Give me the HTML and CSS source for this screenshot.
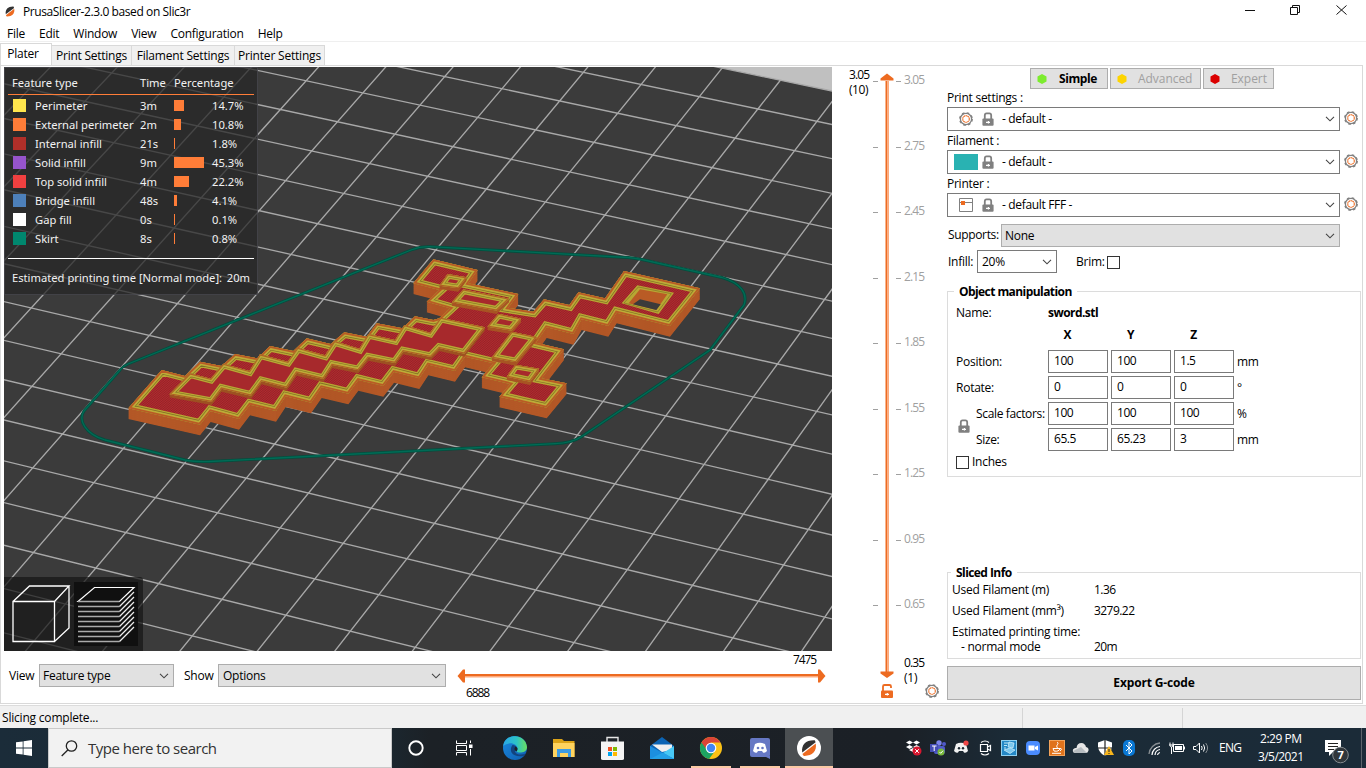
FILE: index.html
```html
<!DOCTYPE html>
<html lang="en">
<head>
<meta charset="utf-8">
<title>PrusaSlicer-2.3.0 based on Slic3r</title>
<link rel="stylesheet" href="styles.css">
</head>
<body>
<svg class="defs" width="0" height="0">
  <defs>
    <symbol id="gear" viewBox="0 0 14 14">
      <circle cx="7" cy="7" r="5.6" fill="none" stroke="#808080" stroke-width="1.3"/>
      <circle cx="7" cy="7" r="6.2" fill="none" stroke="#808080" stroke-width="1.4" stroke-dasharray="2.6 2.27"/>
      <circle cx="7" cy="7" r="3.3" fill="none" stroke="#ed6b21" stroke-width="1.1" stroke-dasharray="1.7 .37"/>
    </symbol>
    <symbol id="lock" viewBox="0 0 12 14">
      <path d="M2.8 7V3.4Q2.8 1.3 4.6 1.3H7.4Q9.2 1.3 9.2 3.4V7" fill="none" stroke="#808080" stroke-width="1.8"/>
      <rect x=".4" y="6.6" width="11.2" height="7.2" rx="1" fill="#808080"/>
      <path d="M4 10.3H8M6.4 9V11.6" stroke="#fff" stroke-width="1.2"/>
    </symbol>
    <symbol id="chev" viewBox="0 0 10 6"><path d="M1 .8L5 4.8L9 .8" fill="none" stroke="#444" stroke-width="1.1"/></symbol>
    <symbol id="prusa" viewBox="0 0 24 24">
      <path d="M5.2 16.5C4 8.5 9 3.8 17.8 4.2L18.6 6.2Z" fill="#323232"/>
      <path d="M18.8 7.6C20 15.5 15 20.2 6.8 19.9L5.4 18Z" fill="#ed6b21"/>
    </symbol>
  </defs>
</svg>

<div class="app">
  <header class="titlebar">
    <svg class="logo" viewBox="4 3 16 18"><use href="#prusa" width="24" height="24"/></svg>
    <span class="title">PrusaSlicer-2.3.0 based on Slic3r</span>
    <svg class="winbtns" viewBox="0 0 106 12"><path d="M1 6.5H11M92.5 1.5L102.500 10.500M102.500 1.500L92.500 10.500" stroke="#111" fill="none"/><path d="M46.500 3.500H53.500V10.500H46.500ZM48.500 3.500V1.500H55.500V8.500H53.500" stroke="#111" fill="none"/></svg>
  </header>
  <nav class="menu"><span>File</span><span>Edit</span><span>Window</span><span>View</span><span>Configuration</span><span>Help</span></nav>
  <div class="tabs">
    <span class="tab on t1">Plater</span><span class="tab t2">Print Settings</span><span class="tab t3">Filament Settings</span><span class="tab t4">Printer Settings</span>
  </div>

  <main class="main">
    <section class="left">
      <div class="view3d">
        <svg class="scene" viewBox="4 67 828 584" width="828" height="584">
          <defs>
            <pattern id="hatch" width="5" height="5" patternUnits="userSpaceOnUse" patternTransform="rotate(50)"><rect width="5" height="5" fill="#b32a2f"/><rect width="2" height="5" fill="#8c2226"/></pattern>
            <pattern id="wall" width="9" height="5" patternUnits="userSpaceOnUse" patternTransform="rotate(12)"><rect width="9" height="5" fill="#b75a28"/><rect width="9" height="1.5" fill="#a9501f"/></pattern>
            <path id="body" d="M25 505L125 390L195 408L240 365L305 378L345 342L412 355L450 318L520 333L560 295L632 312L673 277L740 290L770 250L848 265L885 229L940 240L958 235L990 205L920 185L958 150L880 130L940 58L1073 90L1045 130L1195 162L1165 203L1240 215L1272 178L1348 195L1375 157L1455 175L1512 93L1740 145L1650 258L1490 218L1465 258L1385 238L1360 282L1280 262L1248 308L1332 328L1265 415L1340 430L1280 503L1138 470L1170 432L1085 412L1120 370L1035 350L1005 393L925 374L898 415L822 396L790 438L715 420L685 461L605 442L573 488L497 469L468 513L390 494L357 537L272 514L240 554Z"/>
            <path id="blade" d="M148 463L210 400L272 416L310 371L388 393L420 343L503 365L533 323L615 346L643 303L718 326L745 282L825 300L853 255L930 278L962 233L1095 262L1033 341L958 324L932 351L850 334L825 369L745 353L715 391L637 375L610 417L530 398L500 443L425 424L393 467L305 446L275 486Z"/>
            <path id="b1" d="M958 137L983 102L1040 112L1015 145Z"/>
            <path id="b2" d="M995 187L1030 148L1168 176L1130 212Z"/>
            <path id="b3" d="M1102 260L1135 221L1204 236L1174 272Z"/>
            <path id="b4" d="M1115 353L1175 275L1250 291L1188 367Z"/>
            <path id="b5" d="M1160 410L1186 374L1258 386L1230 425Z"/>
            <clipPath id="cbody"><use href="#body"/></clipPath>
            <clipPath id="cblade"><use href="#blade"/></clipPath>
          </defs>
          <rect x="4" y="67" width="828" height="584" fill="#c0c0c0"/>
          <path id="bed" fill="#3b3b3b"/>
          <path id="grid" fill="none" stroke="#a8a8a8" stroke-width="1.35"/>
          <path d="M128 364L411 250Q420 246.500 430 246.700L628 257.500Q640 258.500 655 262.500L722 277.500C741 283 748 294 744 305L710 350L581 437Q572 443 555 443.700L210 461.500Q195 462 185 460L105 440C85 434 78 420 84 411L120 370Q123 366 128 364Z" fill="none" stroke="#00503f" stroke-width="2.900"/>
          <path d="M128 364L411 250Q420 246.500 430 246.700L628 257.500Q640 258.500 655 262.500L722 277.500C741 283 748 294 744 305L710 350L581 437Q572 443 555 443.700L210 461.500Q195 462 185 460L105 440C85 434 78 420 84 411L120 370Q123 366 128 364Z" fill="none" stroke="#006b56" stroke-width="1.300"/>
          <g transform="translate(120 240) scale(.33333)">
            <g id="walls" fill="url(#wall)"></g>
            <use href="#body" fill="url(#hatch)"/>
            <g clip-path="url(#cbody)" fill="none">
              <use href="#body" stroke="#b7a733" stroke-width="33"/><use href="#body" stroke="#7f6e25" stroke-width="25"/><use href="#body" stroke="#bdab38" stroke-width="21"/><use href="#body" stroke="#b95b25" stroke-width="11"/>
            </g>
            <path d="M1505 190L1552 136L1662 158L1616 222Z" fill="#b7a733"/>
            <path d="M1512 189L1555 141L1654 161L1613 216Z" fill="none" stroke="#806f25" stroke-width="2"/>
            <path d="M1526 190L1560 148L1642 163L1609 210Z" fill="#b95b25"/>
            <path d="M1560 178L1622 193L1609 210L1539 193Z" fill="#3b3b3b"/>
            <g id="bladewall" fill="#9e5122"></g>
            <use href="#blade" fill="#a7292c"/>
            <g clip-path="url(#cblade)" fill="none">
              <use href="#blade" stroke="#b7a733" stroke-width="28"/><use href="#blade" stroke="#7f6e25" stroke-width="20"/><use href="#blade" stroke="#bdab38" stroke-width="17"/><use href="#blade" stroke="#b06024" stroke-width="7"/>
            </g>
            <g id="studs"></g>
          </g>
        </svg>
        <div class="legend">
          <div class="lhead"><span class="c1">Feature type</span><span class="c2">Time</span><span class="c3">Percentage</span></div>
          <div class="lrow"><i style="background:#ffe64d"></i><span class="n">Perimeter</span><span class="t">3m</span><span class="b"><b style="width:10px"></b></span><span>14.7%</span></div>
          <div class="lrow"><i style="background:#ff7d38"></i><span class="n">External perimeter</span><span class="t">2m</span><span class="b"><b style="width:7px"></b></span><span>10.8%</span></div>
          <div class="lrow"><i style="background:#b02f29"></i><span class="n">Internal infill</span><span class="t">21s</span><span class="b"><b style="width:1px"></b></span><span>1.8%</span></div>
          <div class="lrow"><i style="background:#9654cc"></i><span class="n">Solid infill</span><span class="t">9m</span><span class="b"><b style="width:30px"></b></span><span>45.3%</span></div>
          <div class="lrow"><i style="background:#f04040"></i><span class="n">Top solid infill</span><span class="t">4m</span><span class="b"><b style="width:15px"></b></span><span>22.2%</span></div>
          <div class="lrow"><i style="background:#4d80ba"></i><span class="n">Bridge infill</span><span class="t">48s</span><span class="b"><b style="width:3px"></b></span><span>4.1%</span></div>
          <div class="lrow"><i style="background:#fff"></i><span class="n">Gap fill</span><span class="t">0s</span><span class="b"><b style="width:1px"></b></span><span>0.1%</span></div>
          <div class="lrow"><i style="background:#00876e"></i><span class="n">Skirt</span><span class="t">8s</span><span class="b"><b style="width:1px"></b></span><span>0.8%</span></div>
          <div class="lfoot"><span>Estimated printing time [Normal mode]:</span><span>20m</span></div>
        </div>
        <div class="modes">
          <svg width="139" height="74" viewBox="4 577 139 74">
            <rect x="74" y="582" width="64" height="64" fill="#101010"/>
            <path d="M13 601.500H54.500V641.500H13ZM13 601.500L29.500 586H69L54.500 601.500M69 586V628L54.500 641.500" fill="none" stroke="#fff" stroke-width="1.300"/>
            <path d="M78 601.500L94.500 587.500H134L119.500 601.500Z" fill="none" stroke="#fff" stroke-width="1.200"/>
            <path d="M78 606.500H119.500M78 611.500H119.500M78 616.500H119.500M78 621.500H119.500M78 626.500H119.500M78 631.500H119.500M78 636.500H119.500M78 641.500H119.500M78 601.500H119.500" stroke="#aaa" stroke-width="1.300"/>
            <path d="M119.500 606.500L134 592M119.500 611.500L134 597M119.500 616.500L134 602M119.500 621.500L134 607M119.500 626.500L134 612M119.500 631.500L134 617M119.500 636.500L134 622M119.500 641.500L134 627" stroke="#eee" stroke-width="1.300"/>
          </svg>
        </div>
      </div>
      <div class="controls">
        <span class="lab">View</span>
        <div class="sel gray v1"><span>Feature type</span><svg class="chev"><use href="#chev"/></svg></div>
        <span class="lab l2">Show</span>
        <div class="sel gray v2"><span>Options</span><svg class="chev"><use href="#chev"/></svg></div>
        <svg class="hslider" width="380" height="52" viewBox="452 651 380 52">
          <rect x="465" y="674" width="354" height="3" fill="#ed6b21"/><rect x="465" y="676" width="354" height="1.500" fill="#fda97c"/>
          <path d="M457.500 676L463 669.500H465V682.500H463ZM825.500 676L820 669.500H818V682.500H820Z" fill="#ed6b21"/>
          <text x="466" y="697" textLength="24">6888</text><text x="793" y="664" textLength="24">7475</text>
        </svg>
      </div>
    </section>

    <svg class="vslider" width="115" height="637" viewBox="832 66 115 637">
      <rect x="885.500" y="81" width="2" height="591" fill="#ed6b21"/><rect x="887.500" y="81" width="1.500" height="591" fill="#fda97c"/>
      <path d="M880.500 80.500V78.500L887 73.500L893.500 78.500V80.500ZM880.500 671.500V673.500L887 678L893.500 673.500V671.500Z" fill="#ed6b21"/>
      <path d="M873 81.500h5M896 81.500h5M873 147.500h5M896 147.500h5M873 212.500h5M896 212.500h5M873 278.500h5M896 278.500h5M873 343.500h5M896 343.500h5M873 409.500h5M896 409.500h5M873 474.500h5M896 474.500h5M873 540.500h5M896 540.500h5M873 605.500h5M896 605.500h5" stroke="#a0a0a0"/>
      <g fill="#a0a0a0"><text x="904" y="84" textLength="21">3.05</text><text x="904" y="150" textLength="21">2.75</text><text x="904" y="215" textLength="21">2.45</text><text x="904" y="281" textLength="21">2.15</text><text x="904" y="346" textLength="21">1.85</text><text x="904" y="412" textLength="21">1.55</text><text x="904" y="477" textLength="21">1.25</text><text x="904" y="543" textLength="21">0.95</text><text x="904" y="608" textLength="21">0.65</text></g>
      <text x="849" y="79" textLength="21">3.05</text><text x="849" y="94" textLength="19.500">(10)</text><text x="904" y="667" textLength="21">0.35</text><text x="904" y="682" textLength="13.500">(1)</text>
      <path d="M883 691V686.500Q883 685 884.500 685H889.500Q891 685 891 686.500V688" fill="none" stroke="#ed6b21" stroke-width="1.800"/><rect x="881" y="690.500" width="12" height="7.500" rx="1" fill="#ed6b21"/><path d="M885 694.300H889M887.300 693V695.600" stroke="#fff" stroke-width="1.200"/>
      <use href="#gear" x="925" y="684" width="14" height="14"/>
    </svg>

    <section class="right">
      <div class="modesel">
        <span class="mode act"><svg width="10" height="10"><path d="M5 0L9.500 2.500V7.500L5 10L.500 7.500V2.500Z" fill="#7cec2e"/></svg>Simple</span>
        <span class="mode m2"><svg width="10" height="10"><path d="M5 0L9.500 2.500V7.500L5 10L.500 7.500V2.500Z" fill="#fdd400"/></svg>Advanced</span>
        <span class="mode m3"><svg width="10" height="10"><path d="M5 0L9.500 2.500V7.500L5 10L.500 7.500V2.500Z" fill="#db0000"/></svg>Expert</span>
      </div>
      <div class="plabel">Print settings :</div>
      <div class="prow"><div class="sel preset"><svg class="i1"><use href="#gear"/></svg><svg class="i2"><use href="#lock"/></svg><span>- default -</span><svg class="chev"><use href="#chev"/></svg></div><svg class="pg"><use href="#gear"/></svg></div>
      <div class="plabel">Filament :</div>
      <div class="prow"><div class="sel preset"><div class="swatch"></div><svg class="i2"><use href="#lock"/></svg><span>- default -</span><svg class="chev"><use href="#chev"/></svg></div><svg class="pg"><use href="#gear"/></svg></div>
      <div class="plabel">Printer :</div>
      <div class="prow"><div class="sel preset"><svg class="i1" viewBox="0 0 14 14"><path d="M.500 .500H13.500V13.500H.500ZM.500 4.500H13.500" fill="none" stroke="#808080"/><rect x="2" y="3" width="4" height="4" fill="#ed6b21"/></svg><svg class="i2"><use href="#lock"/></svg><span>- default FFF -</span><svg class="chev"><use href="#chev"/></svg></div><svg class="pg"><use href="#gear"/></svg></div>
      <div class="suprow"><span class="suplab">Supports:</span><div class="sel gray sup"><span>None</span><svg class="chev"><use href="#chev"/></svg></div></div>
      <div class="infrow"><span class="inflab">Infill:</span><div class="sel inf"><span>20%</span><svg class="chev"><use href="#chev"/></svg></div><span class="brim">Brim:</span><span class="check"></span></div>

      <div class="box obj">
        <div class="boxtitle">Object manipulation</div>
        <div class="name"><span>Name:</span><b>sword.stl</b></div>
        <div class="manip">
          <span></span><b>X</b><b>Y</b><b>Z</b><span></span>
          <span>Position:</span><div class="inp">100</div><div class="inp">100</div><div class="inp">1.5</div><span class="u">mm</span>
          <span>Rotate:</span><div class="inp">0</div><div class="inp">0</div><div class="inp">0</div><span class="u">°</span>
          <span class="ind">Scale factors:</span><div class="inp">100</div><div class="inp">100</div><div class="inp">100</div><span class="u">%</span>
          <span class="ind">Size:</span><div class="inp">65.5</div><div class="inp">65.23</div><div class="inp">3</div><span class="u">mm</span>
          <svg class="ratio"><use href="#lock"/></svg>
        </div>
        <div class="inches"><span class="check"></span><span>Inches</span></div>
      </div>

      <div class="box info">
        <div class="boxtitle">Sliced Info</div>
        <div class="irow r1"><span>Used Filament (m)</span><span>1.36</span></div>
        <div class="irow r2"><span>Used Filament (mm³)</span><span>3279.22</span></div>
        <div class="irow r3"><span>Estimated printing time:</span></div>
        <div class="irow r4"><span>- normal mode</span><span>20m</span></div>
      </div>
      <div class="export">Export G-code</div>
    </section>
  </main>

  <footer class="status"><span>Slicing complete...</span><i></i><i></i></footer>

  <div class="taskbar">
    <div class="start"><svg width="16" height="16" viewBox="0 0 16 16"><path d="M0 2.300L6.700 1.400V7.600H0ZM7.500 1.200L16 0V7.600H7.500ZM0 8.400H6.700V14.600L0 13.700ZM7.500 8.400H16V16L7.500 14.800Z" fill="#fff"/></svg></div>
    <div class="search"><svg width="17" height="17" viewBox="0 0 17 17"><circle cx="10.500" cy="6" r="5.200" fill="none" stroke="#222" stroke-width="1.300"/><path d="M6.800 10L.700 16" stroke="#222" stroke-width="1.300"/></svg><span>Type here to search</span></div>
    <svg class="apps" width="441" height="40" viewBox="392 728 441 40">
      <circle cx="416" cy="748" r="6.700" fill="none" stroke="#fff" stroke-width="1.900"/>
      <path d="M456.500 740.500V743.500H466.500V740.500M456.500 755.500V752.500H466.500V755.500M456.500 746V750M466.500 746V750M456.500 745.500H466.500V750.500H456.500ZM470.500 740.500V743M470.500 749V755.500" fill="none" stroke="#fff"/><rect x="469" y="744.500" width="3.500" height="3.500" fill="#fff"/>
      <defs><linearGradient id="eg"><stop offset="0" stop-color="#2aa6e6"/><stop offset=".55" stop-color="#2cc3c8"/><stop offset="1" stop-color="#6ade5e"/></linearGradient><linearGradient id="eb" x2="1" y2="1"><stop offset="0" stop-color="#1a8ae0"/><stop offset="1" stop-color="#0f5db0"/></linearGradient></defs>
      <circle cx="515" cy="748" r="12" fill="url(#eb)"/><path d="M503.200 746C504.500 733 525.500 732.500 527 747C527.200 753 518 753.500 516.500 751.500C520 747 514 742.500 509 743.500Q505 744.300 503.200 746Z" fill="url(#eg)"/><path d="M512.500 745C508 751 513 758 523.500 756L526 753.500C517 757 512 751 517 748.500Q516 745 512.500 745Z" fill="#12437f"/><path d="M516.500 751.500Q513 749.500 515.500 746.500Q519 748 516.500 751.500Z" fill="#1c2127"/>
      <path d="M553 739H562L564 741H574.500V757H553Z" fill="#dca318"/><path d="M553 743H574.500V757H553Z" fill="#ffd35e"/><path d="M557 749H571V757H568V753H560V757H557Z" fill="#3e9be2"/>
      <path d="M607 743V737.500H618V743" fill="none" stroke="#e6e6e6" stroke-width="1.400"/><path d="M601 741.500H624V758.500Q624 760 622 760H603Q601 760 601 758.500Z" fill="#f4f4f4"/><path d="M608 747h4v4h-4z" fill="#f25022"/><path d="M613 747h4v4h-4z" fill="#7fba00"/><path d="M608 752h4v4h-4z" fill="#00a4ef"/><path d="M613 752h4v4h-4z" fill="#ffb900"/>
      <path d="M650 746L662 737L674 746V759H650Z" fill="#0c64b4"/><path d="M652 744.500H672V750L662 752Z" fill="#f0f0f0"/><path d="M650 746L663 753L674 759H650Z" fill="#1c8fe0"/><path d="M674 746L663 753L674 759Z" fill="#48c8f5"/><path d="M650 759L663 752.500L674 759Z" fill="#24a0e8"/>
      <circle cx="711" cy="748" r="11" fill="#fbc116"/><path d="M711 748L701.500 742.500A11 11 0 0 0 709 759L715 751Z" fill="#1da462"/><path d="M701.500 742.500A11 11 0 0 1 720.500 742.500H711L707 750Z" fill="#db4437"/><circle cx="711" cy="748" r="5.300" fill="#fff"/><circle cx="711" cy="748" r="4.200" fill="#4285f4"/>
      <rect x="750" y="738" width="20" height="19" rx="2" fill="#6678c4"/><path d="M764 756H770V759Z" fill="#6678c4"/><path d="M755 744Q760 741.500 765 744L767 751Q765 753.500 763 752.500L762 751H758L757 752.500Q755 753.500 753 751Z" fill="#fff"/><circle cx="758" cy="748" r="1.300" fill="#6678c4"/><circle cx="762.500" cy="748" r="1.300" fill="#6678c4"/>
      <rect x="785" y="728" width="48" height="40" fill="#4b4f52"/><circle cx="809" cy="748" r="12" fill="#fff"/><use href="#prusa" x="797" y="736" width="24" height="24"/>
      <path d="M691 766h40v2h-40zM740 766h40v2h-40zM785 766h48v2h-48z" fill="#fbc9a4"/>
    </svg>
    <svg class="tray" width="476" height="40" viewBox="890 728 476 40">
      <path d="M906 742.500L909.500 740.500L913 742.500L909.500 744.500ZM913 742.500L916.500 740.500L920 742.500L916.500 744.500ZM906 747L909.500 745L913 747L909.500 749ZM913 747L916.500 745L920 747L916.500 749ZM909 750L913 748L917 750L913 752Z" fill="#fff"/><circle cx="917" cy="751" r="4.500" fill="#d8172f"/><path d="M915.200 749.200L918.800 752.800M918.800 749.200L915.200 752.800" stroke="#fff"/>
      <circle cx="939" cy="743" r="2.700" fill="#7b83eb"/><circle cx="944" cy="744" r="2" fill="#5059c9"/><rect x="934" y="746" width="11" height="8" rx="2" fill="#5059c9"/><rect x="930" y="744" width="8" height="8" fill="#444db5"/><path d="M932 746H936.500M934.200 746V751" stroke="#fff"/><circle cx="941" cy="752" r="3.500" fill="#78b83c"/><path d="M939.500 752L940.700 753.300L943 750.700" stroke="#fff" fill="none"/>
      <path d="M956 744Q961 741.500 966 744L968 751Q966 753.500 964 752.500L963 751H959L958 752.500Q956 753.500 954 751Z" fill="#f2f2f2"/><circle cx="959" cy="748.300" r="1.200" fill="#1c2730"/><circle cx="963" cy="748.300" r="1.200" fill="#1c2730"/><circle cx="966" cy="743" r="2.600" fill="#f04747"/>
      <path d="M981 742.500Q985 739.500 989 742.500M981 753.500Q985 756.500 989 753.500M980.500 744.500H987.500V751.500H980.500ZM987.500 747L990.500 745.500V750.500L987.500 749" fill="none" stroke="#fff" stroke-width="1.200"/>
      <rect x="1001.500" y="740.500" width="15" height="15" fill="#2488c6" stroke="#8fd0f0"/><path d="M1004 743H1010M1004 745.500H1007M1004 748H1006" stroke="#bfe9f8"/><path d="M1009 742L1014 743L1013 748L1008 747ZM1004 750L1010 748L1015 750L1010 753.500Z" fill="#7cc8ee" stroke="#d6f1fc" stroke-width=".7"/>
      <rect x="1026" y="741" width="14" height="14" rx="4" fill="#4a8cff"/><path d="M1028.500 745.500H1034.500V750.500H1028.500ZM1035 747L1038 745.500V750.500L1035 749Z" fill="#fff"/>
      <rect x="1049.500" y="740.500" width="15" height="15" fill="#e0731c" stroke="#f2a45c"/><path d="M1057 742C1060 744 1055 745 1057.500 748M1053 748.500H1060Q1059 752 1054 751ZM1060 748.500Q1063 748.500 1060 751M1052 753.300H1061" fill="none" stroke="#fff"/>
      <path d="M1076 753Q1072 753 1073 749.500Q1074 747.500 1076.500 748Q1077 743 1081.500 743Q1085 743.300 1086 747Q1089 747.500 1088.500 750.500Q1088 753 1085.500 753Z" fill="#e6e6e6"/><path d="M1073 751L1081 747L1087 753H1076Q1073.500 753 1073 751Z" fill="#b6bcc0"/>
      <path d="M1098 742.500L1105 740L1112 742.500V747Q1111 753 1105 756Q1099 753 1098 747Z" fill="#fff"/><path d="M1105 740V756M1098 748H1112" stroke="#222" stroke-width="1.200"/><path d="M1109 746L1114 755H1104Z" fill="#f8b61c"/><path d="M1109 749V752M1109 753V754" stroke="#222"/>
      <rect x="1123" y="740" width="12" height="16" rx="5" fill="#0a78d4"/><path d="M1126 745L1132 751L1129 754V742L1132 745L1126 751" fill="none" stroke="#fff"/>
      <path d="M1149 754A12 12 0 0 1 1160 743" fill="none" stroke="#888e93" stroke-width="1.300"/><path d="M1152 755A9 9 0 0 1 1160 746.500M1155 755A6 6 0 0 1 1160 749.500M1157.500 755A3 3 0 0 1 1160 752.500" fill="none" stroke="#fff" stroke-width="1.200"/>
      <path d="M1173.500 744.500H1183.500V751.500H1173.500ZM1184.500 746.500V749.500M1169 745H1174M1170 742.500V745Q1170 747 1171.500 747Q1173 747 1173 745V742.500M1171.500 747V754" fill="none" stroke="#fff"/><rect x="1175" y="746" width="7" height="4" fill="#fff"/>
      <path d="M1193.500 746.500H1196L1199.500 743V753L1196 749.500H1193.500Z" fill="none" stroke="#fff"/><path d="M1201.500 746Q1202.800 748 1201.500 750M1203.500 744.500Q1205.800 748 1203.500 751.500" fill="none" stroke="#fff"/><path d="M1205.700 743Q1209.500 748 1205.700 753" fill="none" stroke="#888e93"/>
      <g fill="#fff"><text x="1219" y="752" textLength="23">ENG</text><text x="1260" y="743" textLength="42">2:29 PM</text><text x="1258" y="761" textLength="46">3/5/2021</text></g>
      <path d="M1325 740H1341V752H1333L1329 756V752H1325Z" fill="#fff"/><path d="M1328 743.500H1338M1328 746.500H1338M1328 749.500H1334" stroke="#222"/><circle cx="1340.500" cy="755" r="7.800" fill="#30363b" stroke="#858b8f"/><text x="1337.500" y="759" class="badge">7</text>
      <path d="M1361.500 728V768" stroke="#5b646b"/>
    </svg>
  </div>
</div>
<script src="scene.js"></script>
</body>
</html>
```
FILE: scene.js
```js
// Projects a bed coordinate (in 10 mm units) to the viewport.
function project(i, j) {
  const w = 1 - 0.0039 * i + 0.00759 * j;
  return [(452.7 + 60.1 * i + 29.97 * j) / w, (406 + 12.8 * i - 30.2 * j) / w]
    .map(v => v.toFixed(2)).join(' ');
}

const I0 = -13, I1 = 12, J0 = -14, J1 = 11;
let d = '';
for (let i = I0; i <= I1; i++) d += `M${project(i, J0)}L${project(i, J1)}`;
for (let j = J0; j <= J1; j++) d += `M${project(I0, j)}L${project(I1, j)}`;
document.getElementById('grid').setAttribute('d', d);
document.getElementById('bed').setAttribute('d',
  `M${project(I0, J0)}L${project(I1, J0)}L${project(I1, J1)}L${project(I0, J1)}Z`);

// Side walls: stacked copies of the outline, shifted down.
function extrude(shape, height, step) {
  let out = '';
  for (let y = height; y > 0; y -= step) out += `<use href="#${shape}" y="${y}"/>`;
  return out;
}
document.getElementById('walls').innerHTML = extrude('body', 32, 2);
document.getElementById('bladewall').innerHTML = extrude('blade', 9, 3);
document.getElementById('studs').innerHTML = ['b1', 'b2', 'b3', 'b4', 'b5'].map(s =>
  `<clipPath id="c${s}"><use href="#${s}"/></clipPath>` +
  `<g fill="#a85524">${extrude(s, 10, 2)}</g><use href="#${s}" fill="#a7292c"/>` +
  `<g clip-path="url(#c${s})" fill="none"><use href="#${s}" stroke="#b7a733" stroke-width="28"/>` +
  `<use href="#${s}" stroke="#7f6e25" stroke-width="20"/><use href="#${s}" stroke="#bdab38" stroke-width="17"/>` +
  `<use href="#${s}" stroke="#b06024" stroke-width="7"/></g>`).join('');
```
FILE: styles.css
```css
* { box-sizing: border-box; }
body { margin: 0; overflow: hidden; font: 12px/16px "Open Sans", "Noto Sans", sans-serif; letter-spacing: -.25px; color: #000; background: #fff; white-space: nowrap; }
svg { display: block; flex: none; }
.defs { position: absolute; }
text { font: 12px "Open Sans", "Noto Sans", sans-serif; letter-spacing: 0; }
.app { width: 1366px; height: 768px; display: flex; flex-direction: column; }
.app > * { flex: none; }

.titlebar { height: 24px; display: flex; align-items: center; padding-left: 5px; }
.logo { width: 10px; height: 13px; margin-top: -2px; }
.title { margin-left: 8px; flex: 1; letter-spacing: -.4px; }
.winbtns { width: 106px; height: 12px; margin: -4px 16px 0 0; }
.menu { height: 17px; display: flex; padding-left: 7px; line-height: 19px; }
.menu span { margin-right: 14px; }
.tabs { height: 24px; border-top: 1px solid #efefef; display: flex; align-items: flex-end; }
.tab { height: 20px; line-height: 20px; background: #f0f0f0; border: 1px solid #d9d9d9; border-left: 0; border-bottom: 0; text-align: center; }
.tab.on { height: 22px; background: #fff; border-left: 1px solid #d9d9d9; line-height: 20px; padding-right: 6px; }
.t1 { width: 52px; } .t2 { width: 80px; } .t3 { width: 103px; letter-spacing: -.2px; } .t4 { width: 90px; letter-spacing: -.2px; }

.main { height: 639px; display: flex; border: 1px solid #d9d9d9; margin-right: 3px; }
.left { width: 828px; margin-left: 3px; padding-top: 1px; }
.view3d { position: relative; width: 828px; height: 584px; overflow: hidden; }
.legend { position: absolute; left: 0; top: 0; width: 254px; height: 228px; background: rgba(38,38,38,.74); border: 1px solid rgba(90,90,100,.5); color: #f2f2f2; font: 11.200px/19px "Noto Sans", sans-serif; letter-spacing: 0; padding: 0 3px; }
.lhead { height: 27px; border-bottom: 1px solid #ff7d38; line-height: 30px; padding-left: 4px; display: flex; margin-bottom: 1px; }
.c1 { width: 128px; } .c2 { width: 34px; }
.lrow { height: 19px; display: flex; align-items: center; padding-left: 5px; }
.lrow i { width: 13px; height: 13px; margin-right: 9px; }
.lrow .n { width: 105px; } .lrow .t { width: 34px; } .lrow .b { width: 38px; }
.lrow b { display: block; height: 11px; background: #ff7d38; }
.lfoot { margin-top: 10px; border-top: 1px solid #fff; padding: 9px 4px 0; display: flex; justify-content: space-between; }
.modes { position: absolute; left: 0; bottom: 0; background: rgba(22,22,22,.72); border-radius: 0 3px 0 0; }

.controls { height: 51px; display: flex; align-items: flex-start; padding: 0 0 0 5px; }
.lab { width: 30px; margin-top: 17px; } .l2 { width: 34px; margin-left: 10px; }
.sel { border: 1px solid #7a7a7a; background: #fff; display: flex; align-items: center; padding: 0 4px; }
.sel span { flex: 1; }
.gray { background: #e1e1e1; border-color: #adadad; padding: 0 4px 0 3px; }
.chev { width: 10px; height: 6px; }
.v1 { width: 135px; height: 23px; margin-top: 13px; } .v2 { width: 228px; height: 23px; padding-left: 4px; margin-top: 13px; }
.hslider { margin-left: 6px; }

.right { width: 414px; height: 636px; display: flex; flex-direction: column; }
.right > * { flex: none; }
.modesel { display: flex; gap: 2px; padding: 2px 0 0 83px; height: 23px; }
.mode { height: 21px; border: 1px solid #adadad; background: #e1e1e1; display: flex; align-items: center; padding-left: 6px; gap: 13px; width: 78px; color: #a0a0a0; letter-spacing: -.05px; }
.mode.act { font-weight: 700; color: #000; letter-spacing: -.4px; gap: 12px; }
.m2 { width: 91px; gap: 11px; } .m3 { width: 71px; gap: 11px; }
.plabel { height: 18px; line-height: 18px; }
.prow { height: 25px; display: flex; align-items: flex-start; }
.preset { width: 393px; height: 24px; padding-left: 11px; }
.preset span { letter-spacing: -.33px; }
.i1 { width: 14px; height: 14px; margin-right: 9px; } .i2 { width: 12px; height: 14px; margin-right: 8px; }
.swatch { width: 24px; height: 16px; background: #29b2b2; margin: 0 4px 0 -5px; }
.pg { width: 14px; height: 14px; margin: 4px 0 0 4px; }
.suprow { height: 24px; margin-top: 6px; display: flex; align-items: flex-start; }
.suplab { width: 54px; padding-left: 1px; margin-top: 3px; letter-spacing: -.35px; }
.sup { width: 339px; height: 23px; }
.infrow { height: 24px; margin-top: 2px; display: flex; align-items: center; }
.inflab { width: 30px; padding-left: 1px; } .inf { width: 80px; height: 23px; margin-bottom: 1px; }
.brim { margin-left: 19px; width: 31px; }
.check { width: 13px; height: 13px; border: 1px solid #333; background: #fff; }
.box { border: 1px solid #dcdcdc; position: relative; }
.boxtitle { position: absolute; top: -8px; left: 6px; padding: 0 5px; background: #fff; font-weight: 700; line-height: 16px; letter-spacing: -.57px; }
.obj { margin-top: 17px; height: 186px; padding: 13px 0 0 8px; }
.name { display: flex; height: 18px; } .name span { width: 92px; }
.name b { letter-spacing: -.55px; }
.manip { display: grid; grid-template-columns: 89px 60px 60px 60px 40px; grid-template-rows: 24px 23px 23px 23px 23px; gap: 3px; align-items: center; position: relative; }
.manip b { text-align: center; padding-right: 21px; }
.inp { height: 23px; border: 1px solid #7a7a7a; padding-left: 5px; line-height: 20px; letter-spacing: -.45px; }
.ind { padding-left: 20px; letter-spacing: -.35px; }
.ratio { position: absolute; left: 2px; top: 96px; width: 12px; height: 14px; }
.inches { display: flex; gap: 3px; margin-top: 3px; align-items: center; height: 16px; }
.info { margin-top: 95px; height: 87px; }
.info .boxtitle { left: 3px; }
.irow { display: flex; padding-left: 4px; } .irow span:first-child { width: 142px; }
.irow span:last-child:not(:first-child) { letter-spacing: -.55px; }
.r1 { padding-top: 9px; } .r2 { padding-top: 5px; } .r3 { padding-top: 5px; } .r4 { margin-top: -1px; } .r4 span:first-child { padding-left: 9px; }
.export { margin-top: 7px; height: 34px; border: 1px solid #adadad; background: #e1e1e1; text-align: center; font-weight: 700; line-height: 32px; letter-spacing: -.15px; }

.status { height: 23px; border-top: 1px solid #dcdcdc; margin-top: 1px; background: #f0f0f0; display: flex; line-height: 24px; padding-left: 2px; }
.status span { width: 1020px; letter-spacing: -.2px; } .status i { width: 160px; border-left: 1px solid #d5d5d5; margin-top: 2px; }
.taskbar { height: 40px; display: flex; background: linear-gradient(90deg, #1b2c39 0, #1b2831 380px, #1c2126 430px, #1b2026 900px, #1b2b37 1010px, #1b2b38 1366px); color: #fff; }
.start { width: 48px; display: flex; align-items: center; justify-content: center; }
.search { width: 344px; background: #f2f2f2; border: 1px solid #c9c9c9; display: flex; align-items: center; padding-left: 12px; gap: 10px; color: #333; font-size: 15px; letter-spacing: -.5px; }
.tray { margin-left: 57px; }
.badge { font-size: 11px; font-weight: 700; fill: #fff; }
```
